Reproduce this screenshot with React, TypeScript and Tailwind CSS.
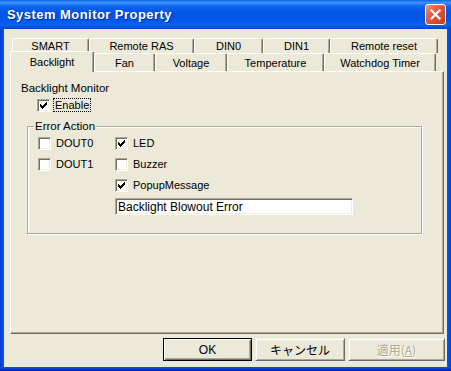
const ROW1 = [
  { label: "SMART", w: 77 },
  { label: "Remote RAS", w: 105 },
  { label: "DIN0", w: 69 },
  { label: "DIN1", w: 67 },
  { label: "Remote reset", w: 108 },
];

const ROW2 = [
  { label: "Fan", w: 61 },
  { label: "Voltage", w: 72 },
  { label: "Temperature", w: 97 },
  { label: "Watchdog Timer", w: 112 },
];

// classic 7x7 check glyph, one entry per pixel run: [x, y, w]
const CHECK: [number, number, number][] = [
  [6, 0, 1],
  [5, 1, 2],
  [0, 2, 1],
  [4, 2, 3],
  [0, 3, 2],
  [3, 3, 3],
  [0, 4, 5],
  [1, 5, 3],
  [2, 6, 1],
];

function Box({ on }: { on?: boolean }) {
  return (
    <span className="flex h-[13px] w-[13px] shrink-0 items-center justify-center border border-t-[#aca899] border-l-[#aca899] border-r-white border-b-white bg-white shadow-[inset_1px_1px_0_#716f64,inset_-1px_-1px_0_#f1efe2]">
      {on && (
        <svg width="7" height="7" viewBox="0 0 7 7" shapeRendering="crispEdges">
          {CHECK.map(([x, y, w], i) => (
            <rect key={i} x={x} y={y} width={w} height={1} fill="#000" />
          ))}
        </svg>
      )}
    </span>
  );
}

function CheckRow({ label, on }: { label: string; on?: boolean }) {
  return (
    <div className="flex h-[16px] items-center gap-[5px]">
      <Box on={on} />
      <span>{label}</span>
    </div>
  );
}

const Tab = ({ label, w, h }: { label: string; w: number; h: string }) => (
  <div
    style={{ width: w }}
    className={`flex ${h} shrink-0 items-center justify-center rounded-t-[2px] border-l border-t border-r border-l-white border-t-white border-r-[#716f64] shadow-[inset_-1px_0_0_#aca899]`}
  >
    {label}
  </div>
);

export default function App() {
  return (
    <div className="flex h-[371px] w-[451px] flex-col bg-[linear-gradient(90deg,#0831d9_0px,#0055e5_2px,#0055e5_449px,#0831d9_451px)] font-['Liberation_Sans',Arial,sans-serif] text-[11px] leading-[14px] text-black">
      {/* title bar */}
      <div className="flex h-[29px] shrink-0 items-center justify-between bg-[linear-gradient(180deg,#0a5fe8_0%,#3d95ff_9%,#0b63ef_22%,#0055e5_45%,#0057ea_70%,#0a63f4_86%,#0046c0_100%)] pl-[7px] pr-[5px]">
        <span className="text-[13px] font-bold tracking-[0.45px] text-white [text-shadow:1px_1px_0_#0a2a8a]">
          System Monitor Property
        </span>
        <div className="flex h-[21px] w-[21px] items-center justify-center rounded-[3px] border border-white bg-[linear-gradient(135deg,#f09070_0%,#e2583c_45%,#c43a1a_100%)]">
          <svg width="11" height="11" viewBox="0 0 11 11">
            <path d="M1.5 1.5 L9.5 9.5 M9.5 1.5 L1.5 9.5" stroke="#fff" strokeWidth="2.2" strokeLinecap="square" />
          </svg>
        </div>
      </div>

      {/* client area */}
      <div className="mx-[4px] flex flex-1 flex-col bg-[#ece9d8] pt-[9px]">
        {/* tabs */}
        <div className="ml-[8px] flex h-[15px]">
          {ROW1.map((t) => (
            <Tab key={t.label} label={t.label} w={t.w} h="h-[15px]" />
          ))}
        </div>
        <div className="ml-[6px] flex h-[18px] items-end">
          <div className="relative z-10 -mb-px flex h-[21px] w-[84px] shrink-0 items-center justify-center rounded-t-[2px] border-l border-t border-r border-l-white border-t-white border-r-[#716f64] bg-[#ece9d8] pb-[1px] shadow-[inset_-1px_0_0_#aca899]">
            Backlight
          </div>
          {ROW2.map((t) => (
            <Tab key={t.label} label={t.label} w={t.w} h="h-[18px]" />
          ))}
        </div>

        {/* panel */}
        <div className="ml-[6px] h-[263px] w-[434px] border border-t-white border-l-white border-r-[#716f64] border-b-[#716f64] pl-[10px] pt-[9px] shadow-[inset_-1px_-1px_0_#aca899]">
          <div className="text-[11.5px]">Backlight Monitor</div>
          <div className="ml-[16px] mt-[2px] flex h-[16px] items-center gap-[3px]">
            <Box on />
            <span className="border border-dotted border-black px-[1px] leading-[12px]">Enable</span>
          </div>

          <fieldset className="ml-[6px] mt-[6px] w-[395px] border border-[#aca899] pb-[18px] pl-[6px] shadow-[inset_1px_1px_0_#fff,1px_1px_0_#fff]">
            <legend className="bg-[#ece9d8] px-[1px] text-[11.5px]">Error Action</legend>
            <div className="ml-[4px] mt-[2px] flex">
              <div className="flex w-[77px] flex-col gap-[5px]">
                <CheckRow label="DOUT0" />
                <CheckRow label="DOUT1" />
              </div>
              <div className="flex flex-col gap-[5px]">
                <CheckRow label="LED" on />
                <CheckRow label="Buzzer" />
                <CheckRow label="PopupMessage" on />
                <div className="flex h-[17px] w-[238px] items-center border border-t-[#aca899] border-l-[#aca899] border-r-white border-b-white bg-white pl-[2px] text-[12px] shadow-[inset_1px_1px_0_#716f64,inset_-1px_-1px_0_#f1efe2]">
                  Backlight Blowout Error
                </div>
              </div>
            </div>
          </fieldset>
        </div>

        {/* buttons */}
        <div className="mt-[4px] flex justify-end gap-[3px] pr-[2px] text-[12px]">
          <button className="h-[23px] w-[89px] border border-black bg-[#ece9d8] shadow-[inset_1px_1px_0_#fff,inset_-1px_-1px_0_#716f64,inset_-2px_-2px_0_#aca899]">
            OK
          </button>
          <button className="h-[23px] w-[90px] border border-t-[#f1efe2] border-l-[#f1efe2] border-r-[#716f64] border-b-[#716f64] bg-[#ece9d8] font-['Noto_Sans_CJK_JP',sans-serif] shadow-[inset_1px_1px_0_#fff,inset_-1px_-1px_0_#aca899]">
            キャンセル
          </button>
          <button
            disabled
            className="h-[23px] w-[97px] border border-t-[#f1efe2] border-l-[#f1efe2] border-r-[#716f64] border-b-[#716f64] bg-[#ece9d8] font-['Noto_Sans_CJK_JP',sans-serif] text-[#aca899] shadow-[inset_1px_1px_0_#fff,inset_-1px_-1px_0_#aca899] [text-shadow:1px_1px_0_#fff]"
          >
            適用(<span className="underline">A</span>)
          </button>
        </div>
      </div>

      {/* bottom frame */}
      <div className="h-[4px] shrink-0 bg-[linear-gradient(180deg,#0055e5_0%,#0831d9_60%,#001ea0_100%)]" />
    </div>
  );
}
